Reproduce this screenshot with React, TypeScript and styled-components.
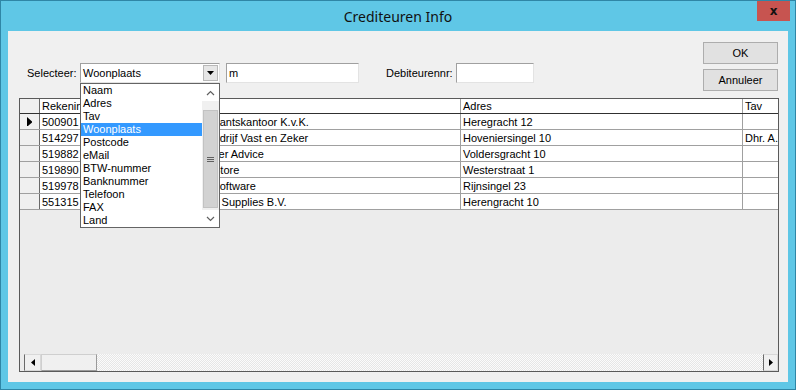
import React from "react";
import styled, { createGlobalStyle } from "styled-components";

const GlobalStyle = createGlobalStyle`
  html, body {
    margin: 0;
    padding: 0;
  }
  body {
    font-family: "Liberation Sans", Arial, sans-serif;
    font-size: 11px;
    color: #000;
  }
`;

const Window = styled.div`
  width: 796px;
  height: 390px;
  box-sizing: border-box;
  background: #5fc7e6;
  border: 1px solid #2f86a6;
  padding: 0 7px 7px;
  display: flex;
  flex-direction: column;
`;

const TitleBar = styled.div`
  position: relative;
  height: 30px;
  display: flex;
  align-items: center;
  justify-content: center;
  font-family: "Noto Sans", "Open Sans", sans-serif;
  font-size: 14px;
  color: #111;
`;

const CloseButton = styled.div`
  position: absolute;
  top: 0;
  right: -2px;
  width: 33px;
  height: 20px;
  background: #c75450;
  display: flex;
  align-items: center;
  justify-content: center;
  font-family: "DejaVu Sans", sans-serif;
  font-weight: bold;
  font-size: 12px;
  color: #111;
`;

const Client = styled.div`
  position: relative;
  flex: 1;
  background: #f0f0f0;
  display: flex;
  flex-direction: column;
`;

const TopArea = styled.div`
  height: 67px;
  display: flex;
  align-items: flex-start;
  padding: 0 10px 0 19px;
`;

const Controls = styled.div`
  margin-top: 32px;
  height: 20px;
  display: flex;
  align-items: center;
`;

const Label = styled.span<{ $w: number; $ml?: number }>`
  width: ${(p) => p.$w}px;
  margin-left: ${(p) => p.$ml ?? 0}px;
  white-space: nowrap;
`;

const Field = styled.div<{ $w: number; $ml?: number }>`
  position: relative;
  box-sizing: border-box;
  width: ${(p) => p.$w}px;
  margin-left: ${(p) => p.$ml ?? 0}px;
  height: 20px;
  background: #fff;
  border: 1px solid #a0a0a0;
  border-right-color: #e3e3e3;
  border-bottom-color: #e3e3e3;
  display: flex;
  align-items: center;
  padding-left: 2px;
`;

const DropButton = styled.div`
  position: absolute;
  right: 1px;
  top: 1px;
  width: 15px;
  height: 16px;
  box-sizing: border-box;
  background: #e6e6e6;
  border: 1px solid #b8b8b8;
  display: flex;
  align-items: center;
  justify-content: center;
`;

const Buttons = styled.div`
  margin-left: auto;
  margin-top: 11px;
  display: flex;
  flex-direction: column;
  gap: 5px;
`;

const Button = styled.div`
  width: 75px;
  height: 22px;
  box-sizing: border-box;
  background: #e1e1e1;
  border: 1px solid #adadad;
  display: flex;
  align-items: center;
  justify-content: center;
`;

const Grid = styled.div`
  margin: 0 9px 10px 11px;
  height: 274px;
  box-sizing: border-box;
  border: 1px solid #5a5a5a;
  background: #ececec;
  display: flex;
  flex-direction: column;
  overflow: hidden;
`;

const Row = styled.div<{ $header?: boolean }>`
  display: flex;
  height: ${(p) => (p.$header ? 15 : 16)}px;
  box-sizing: border-box;
  border-bottom: 1px solid ${(p) => (p.$header ? "#303030" : "#a0a0a0")};
  background: #fff;
  flex-shrink: 0;
`;

const Cell = styled.div<{ $w: number }>`
  width: ${(p) => p.$w}px;
  flex-shrink: 0;
  box-sizing: border-box;
  border-right: 1px solid #a0a0a0;
  padding-left: 2px;
  white-space: nowrap;
  overflow: hidden;
  display: flex;
  align-items: center;
`;

const Indicator = styled.div`
  width: 20px;
  flex-shrink: 0;
  box-sizing: border-box;
  background: #f0f0f0;
  border-right: 1px solid #6a6a6a;
  display: flex;
  align-items: center;
  justify-content: center;
`;

const Empty = styled.div`
  flex: 1;
`;

const HScroll = styled.div`
  height: 17px;
  margin-left: 4px;
  display: flex;
  background-color: #f4f4f4;
  background-image: repeating-conic-gradient(#e6e6e6 0 25%, #fbfbfb 0 50%);
  background-size: 2px 2px;
`;

const ScrollArrow = styled.div<{ $w: number }>`
  width: ${(p) => p.$w}px;
  box-sizing: border-box;
  background: #f0f0f0;
  border: 1px solid #d8d8d8;
  border-left: 1px solid #6a6a6a;
  display: flex;
  align-items: center;
  justify-content: center;
`;

const HThumb = styled.div`
  width: 56px;
  box-sizing: border-box;
  background: #f0f0f0;
  border: 1px solid #cfcfcf;
  border-right-color: #9a9a9a;
  border-bottom-color: #9a9a9a;
`;

const Track = styled.div`
  flex: 1;
`;

const DropList = styled.div`
  position: absolute;
  left: 72px;
  top: 52px;
  width: 140px;
  height: 145px;
  box-sizing: border-box;
  background: #fff;
  border: 1px solid #646464;
  display: flex;
  z-index: 5;
`;

const Items = styled.div`
  flex: 1;
`;

const Item = styled.div<{ $sel?: boolean }>`
  height: 13px;
  line-height: 13px;
  padding-left: 2px;
  background: ${(p) => (p.$sel ? "#3399ff" : "transparent")};
  color: ${(p) => (p.$sel ? "#fff" : "#000")};
`;

const VScroll = styled.div`
  width: 17px;
  display: flex;
  flex-direction: column;
  background: #f0f0f0;
`;

const VArrow = styled.div`
  height: 17px;
  background: #fff;
  display: flex;
  align-items: center;
  justify-content: center;
`;

const VThumb = styled.div`
  margin: 9px 1px 0;
  height: 98px;
  box-sizing: border-box;
  background: #d2d2d2;
  border: 1px solid #c2c2c2;
  display: flex;
  align-items: center;
  justify-content: center;
`;

const VSpacer = styled.div`
  flex: 1;
`;

const cols = [138, 283, 282, 60];

const rows = [
  ["500901", "Accountantskantoor K.v.K.", "Heregracht 12", ""],
  ["514297", "Bouwbedrijf Vast en Zeker", "Hoveniersingel 10", "Dhr. A. Jansen"],
  ["519882", "Computer Advice", "Voldersgracht 10", ""],
  ["519890", "Game Store", "Westerstraat 1", ""],
  ["519978", "Smart Software", "Rijnsingel 23", ""],
  ["551315", "Kantoor Supplies B.V.", "Herengracht 10", ""],
];

const options = [
  "Naam",
  "Adres",
  "Tav",
  "Woonplaats",
  "Postcode",
  "eMail",
  "BTW-nummer",
  "Banknummer",
  "Telefoon",
  "FAX",
  "Land",
];

const Chevron = ({ up }: { up?: boolean }) => (
  <svg width="9" height="6" viewBox="0 0 9 6">
    <path
      d={up ? "M1 5 L4.5 1.5 L8 5" : "M1 1 L4.5 4.5 L8 1"}
      fill="none"
      stroke="#606060"
      strokeWidth="1.2"
    />
  </svg>
);

const Tri = ({ dir, size = 1 }: { dir: "down" | "left" | "right"; size?: number }) => {
  const d =
    dir === "down"
      ? "M0 0 H7 L3.5 4 Z"
      : dir === "left"
      ? "M4 0 V7 L0 3.5 Z"
      : "M0 0 V7 L4 3.5 Z";
  const w = dir === "down" ? 7 : 4;
  const h = dir === "down" ? 4 : 7;
  return (
    <svg width={w * size} height={h * size} viewBox={`0 0 ${w} ${h}`}>
      <path d={d} fill="#000" />
    </svg>
  );
};

export default function App() {
  return (
    <>
      <GlobalStyle />
      <Window>
        <TitleBar>
          Crediteuren Info
          <CloseButton>x</CloseButton>
        </TitleBar>
        <Client>
          <TopArea>
            <Controls>
              <Label $w={53}>Selecteer:</Label>
              <Field $w={140}>
                Woonplaats
                <DropButton>
                  <Tri dir="down" />
                </DropButton>
              </Field>
              <Field $w={133} $ml={6}>
                m
              </Field>
              <Label $w={70} $ml={27}>
                Debiteurennr:
              </Label>
              <Field $w={78} />
            </Controls>
            <Buttons>
              <Button>OK</Button>
              <Button>Annuleer</Button>
            </Buttons>
          </TopArea>

          <Grid>
            <Row $header>
              <Indicator />
              <Cell $w={cols[0]}>Rekeningnummer</Cell>
              <Cell $w={cols[1]}>Naam</Cell>
              <Cell $w={cols[2]}>Adres</Cell>
              <Cell $w={cols[3]}>Tav</Cell>
            </Row>
            {rows.map((r, i) => (
              <Row key={r[0]}>
                <Indicator>{i === 0 && <Tri dir="right" size={1.4} />}</Indicator>
                {r.map((v, j) => (
                  <Cell key={j} $w={cols[j]}>
                    {v}
                  </Cell>
                ))}
              </Row>
            ))}
            <Empty />
            <HScroll>
              <ScrollArrow $w={17}>
                <Tri dir="left" />
              </ScrollArrow>
              <HThumb />
              <Track />
              <ScrollArrow $w={15}>
                <Tri dir="right" />
              </ScrollArrow>
            </HScroll>
          </Grid>

          <DropList>
            <Items>
              {options.map((o) => (
                <Item key={o} $sel={o === "Woonplaats"}>
                  {o}
                </Item>
              ))}
            </Items>
            <VScroll>
              <VArrow>
                <Chevron up />
              </VArrow>
              <VThumb>
                <svg width="7" height="7" viewBox="0 0 7 7">
                  <path d="M0 1.5 H7 M0 3.5 H7 M0 5.5 H7" stroke="#606060" strokeWidth="1" />
                </svg>
              </VThumb>
              <VSpacer />
              <VArrow>
                <Chevron />
              </VArrow>
            </VScroll>
          </DropList>
        </Client>
      </Window>
    </>
  );
}
